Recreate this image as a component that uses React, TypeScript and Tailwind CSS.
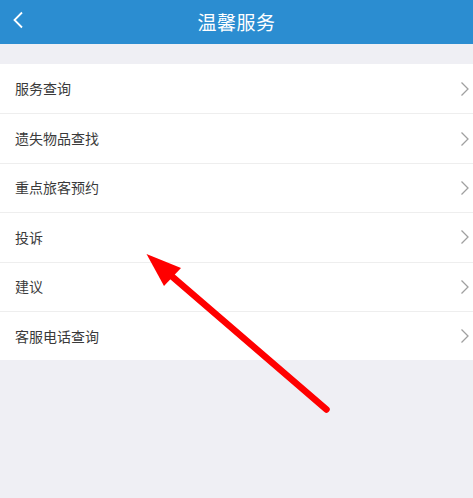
const items = ["服务查询", "遗失物品查找", "重点旅客预约", "投诉", "建议", "客服电话查询"];

export default function App() {
  return (
    <div
      className="relative h-[498px] w-[473px] overflow-hidden bg-[#efeff4]"
      style={{ fontFamily: '"Noto Sans CJK SC", "Noto Sans", sans-serif' }}
    >
      <header className="relative flex h-[44px] items-center justify-center bg-[#2b8dd1]">
        <svg
          className="absolute left-[12px] top-[11px]"
          width="12"
          height="18"
          viewBox="0 0 12 18"
          fill="none"
        >
          <path d="M10 1.5 L2.5 9 L10 16.5" stroke="#ffffff" strokeWidth="1.8" />
        </svg>
        <h1 className="text-[19px] tracking-[0.5px] text-white">温馨服务</h1>
      </header>

      <ul className="mt-[20px] bg-white">
        {items.map((label, i) => (
          <li
            key={label}
            className={`flex h-[49.4px] items-center justify-between pl-[15px] pr-[3px] ${
              i > 0 ? "border-t border-[#eeeeee]" : ""
            }`}
          >
            <span className="text-[14px] text-[#3a3a3a]">{label}</span>
            <svg width="10" height="16" viewBox="0 0 10 16" fill="none">
              <path d="M1.5 1.5 L8 8 L1.5 14.5" stroke="#a0a0a0" strokeWidth="1.3" />
            </svg>
          </li>
        ))}
      </ul>

      <svg className="pointer-events-none absolute left-0 top-0" width="473" height="498">
        <line
          x1="326.5"
          y1="409.5"
          x2="168"
          y2="273"
          stroke="#ff0000"
          strokeWidth="6.5"
          strokeLinecap="round"
        />
        <polygon points="146.5,254 181,268 164,286" fill="#ff0000" />
      </svg>
    </div>
  );
}
